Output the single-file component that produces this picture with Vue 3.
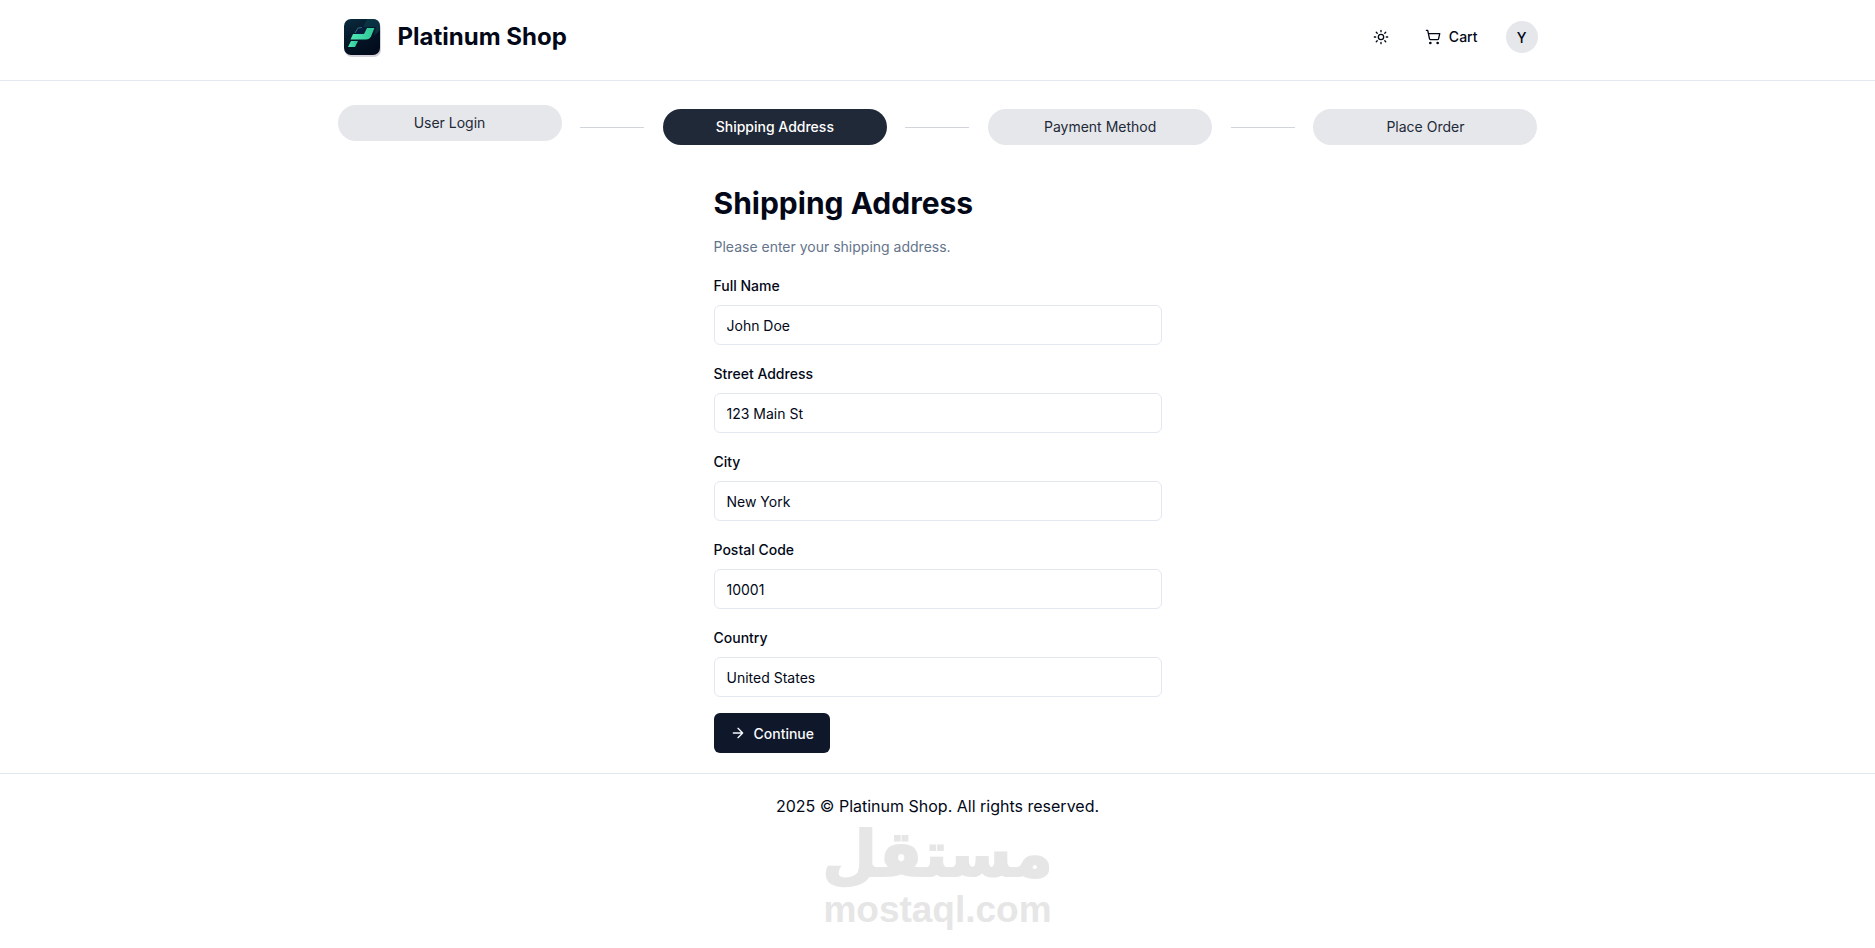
<template>
  <div class="layout">
    <header class="header">
      <div class="wrapper header-inner">
        <a href="#" class="brand">
          <svg class="brand-logo" width="48" height="48" viewBox="0 0 48 48" aria-hidden="true">
            <defs>
              <linearGradient id="tile" x1="0" y1="0" x2="0.6" y2="1">
                <stop offset="0" stop-color="#0a2c3f" />
                <stop offset="0.6" stop-color="#041526" />
                <stop offset="1" stop-color="#020c1c" />
              </linearGradient>
              <linearGradient id="mark" x1="0" y1="0" x2="1" y2="0">
                <stop offset="0" stop-color="#4fe8b5" />
                <stop offset="1" stop-color="#2fc596" />
              </linearGradient>
            </defs>
            <rect x="7" y="8" width="36" height="36" rx="7" fill="#b9b3c2" opacity="0.6" />
            <rect x="6" y="6" width="36" height="36" rx="7" fill="url(#tile)" />
            <path d="M29 6H35Q42 6 42 13V17L36 23L38 14H25Z" fill="#0d4152" opacity="0.6" />
            <path d="M17 21L20 15H28L26 21Z" fill="#0a1c3c" />
            <path d="M17 20L20 15L24 14.500" fill="none" stroke="#2b6a80" stroke-width="1" />
            <path d="M29 15H36.5L33 23.5Q31.500 26.500 28 26.500H12.500L15 21H26Z" fill="url(#mark)" />
            <path d="M13 28H20L17 34H10Z" fill="url(#mark)" />
          </svg>
          <span class="brand-name">Platinum Shop</span>
        </a>

        <nav class="menu">
          <button type="button" class="theme-btn" aria-label="Theme">
            <svg class="icon" viewBox="0 0 24 24">
              <circle cx="12" cy="12" r="4" />
              <path
                d="M12 2v2M12 20v2M4.93 4.93l1.41 1.41M17.66 17.66l1.41 1.41M2 12h2M20 12h2M6.34 17.66l-1.41 1.41M19.07 4.93l-1.41 1.41"
              />
            </svg>
          </button>
          <a href="#" class="cart-link">
            <svg class="icon" viewBox="0 0 24 24">
              <circle cx="8" cy="21" r="1" />
              <circle cx="19" cy="21" r="1" />
              <path
                d="M2.05 2.05h2l2.66 12.42a2 2 0 0 0 2 1.58h9.78a2 2 0 0 0 1.95-1.57l1.65-7.43H5.12"
              />
            </svg>
            Cart
          </a>
          <button type="button" class="user-btn">Y</button>
        </nav>
      </div>
    </header>

    <main class="wrapper main">
      <div class="steps">
        <template v-for="(step, index) in steps" :key="step">
          <div class="step" :class="{ active: index === current, first: index === 0 }">
            {{ step }}
          </div>
          <hr v-if="index < steps.length - 1" class="step-line" />
        </template>
      </div>

      <form class="address-form" @submit.prevent>
        <h1>Shipping Address</h1>
        <p class="hint">Please enter your shipping address.</p>

        <div v-for="field in fields" :key="field.id" class="field">
          <label :for="field.id">{{ field.label }}</label>
          <input :id="field.id" v-model="address[field.id]" type="text" />
        </div>

        <button type="submit" class="submit-btn">
          <svg class="icon" viewBox="0 0 24 24">
            <path d="M5 12h14M12 5l7 7-7 7" />
          </svg>
          Continue
        </button>
      </form>
    </main>

    <footer class="footer">
      <p>2025 © Platinum Shop. All rights reserved.</p>
      <div class="watermark">
        <span class="watermark-ar" lang="ar" dir="rtl">مستقل</span>
        <span class="watermark-en">mostaql.com</span>
      </div>
    </footer>
  </div>
</template>

<script setup>
import { reactive } from 'vue';

const steps = ['User Login', 'Shipping Address', 'Payment Method', 'Place Order'];
const current = 1;

const fields = [
  { id: 'fullName', label: 'Full Name' },
  { id: 'streetAddress', label: 'Street Address' },
  { id: 'city', label: 'City' },
  { id: 'postalCode', label: 'Postal Code' },
  { id: 'country', label: 'Country' },
];

const address = reactive({
  fullName: 'John Doe',
  streetAddress: '123 Main St',
  city: 'New York',
  postalCode: '10001',
  country: 'United States',
});
</script>

<style>
body {
  background: #fff;
}
</style>

<style scoped>
.layout,
.layout * {
  box-sizing: border-box;
}

.layout {
  display: flex;
  flex-direction: column;
  min-height: 100vh;
  color: #020817;
  font-family: Inter, 'Liberation Sans', sans-serif;
  font-size: 16px;
  line-height: 24px;
}

.wrapper {
  width: 100%;
  max-width: 1280px;
  margin: 0 auto;
  padding: 0 40px;
}

.icon {
  width: 16px;
  height: 16px;
  fill: none;
  stroke: currentColor;
  stroke-width: 2;
  stroke-linecap: round;
  stroke-linejoin: round;
}

/* header */
.header {
  border-bottom: 1px solid #e2e8f0;
}

.header-inner {
  display: flex;
  justify-content: space-between;
  align-items: flex-start;
  padding-top: 13px;
  padding-bottom: 19px;
}

.brand {
  display: flex;
  align-items: center;
  gap: 12px;
  color: inherit;
  text-decoration: none;
}

.brand-name {
  font-size: 24px;
  line-height: 32px;
  font-weight: 700;
}

.menu {
  display: flex;
  align-items: center;
  padding-top: 4px;
}

.theme-btn {
  display: flex;
  padding: 12px 16px;
  border: none;
  background: none;
  color: inherit;
  cursor: pointer;
}

.cart-link {
  display: flex;
  align-items: center;
  gap: 8px;
  padding: 0 28px 0 20px;
  color: inherit;
  font-size: 14px;
  line-height: 20px;
  font-weight: 500;
  text-decoration: none;
}

.user-btn {
  width: 32px;
  height: 32px;
  padding: 0;
  border: none;
  border-radius: 50%;
  background: #e5e7eb;
  color: inherit;
  font-family: inherit;
  font-size: 14px;
  font-weight: 500;
  cursor: pointer;
}

/* checkout steps */
.main {
  padding-top: 24px;
  padding-bottom: 20px;
}

.steps {
  display: flex;
  justify-content: space-between;
  align-items: center;
}

.step {
  width: 224px;
  margin-top: 4px;
  padding: 8px;
  border-radius: 18px;
  background: #e5e7eb;
  color: #1f2937;
  font-size: 14px;
  line-height: 20px;
  text-align: center;
}

.step.first {
  align-self: flex-start;
  margin-top: 0;
}

.step.active {
  background: #1f2937;
  color: #fff;
  font-weight: 500;
}

.step-line {
  width: 64px;
  margin: 4px 0 0;
  border: none;
  border-top: 1px solid #d1d5db;
}

/* address form */
.address-form {
  display: flex;
  flex-direction: column;
  align-items: flex-start;
  gap: 16px;
  max-width: 448px;
  margin: 40px auto 0;
}

.address-form h1 {
  margin: 0;
  font-size: 30px;
  line-height: 36px;
  font-weight: 700;
}

.hint {
  margin: 0;
  color: #64748b;
  font-size: 14px;
  line-height: 20px;
}

.field {
  width: 100%;
}

.field label {
  display: block;
  margin-bottom: 6px;
  font-size: 14px;
  line-height: 26px;
  font-weight: 500;
}

.field input {
  display: block;
  width: 100%;
  height: 40px;
  padding: 8px 12px;
  border: 1px solid #e2e8f0;
  border-radius: 6px;
  background: #fff;
  color: inherit;
  font-family: inherit;
  font-size: 14px;
}

.submit-btn {
  display: flex;
  align-items: center;
  gap: 8px;
  height: 40px;
  padding: 0 16px;
  border: none;
  border-radius: 6px;
  background: #0f172a;
  color: #f8fafc;
  font-family: inherit;
  font-size: 14px;
  font-weight: 500;
  cursor: pointer;
}

/* footer */
.footer {
  padding: 20px 20px 0;
  border-top: 1px solid #e2e8f0;
  text-align: center;
}

.footer p {
  margin: 0;
}

.watermark {
  display: flex;
  flex-direction: column;
  align-items: center;
  color: #e6e6e6;
  font-weight: 700;
}

.watermark-ar {
  font-family: 'DejaVu Sans', sans-serif;
  font-size: 63px;
  line-height: 74px;
  -webkit-text-stroke: 2px #e6e6e6;
  stroke-linejoin: round;
}

.watermark-en {
  font-family: 'Liberation Sans', Arial, sans-serif;
  font-size: 37px;
  line-height: 36px;
}
</style>
